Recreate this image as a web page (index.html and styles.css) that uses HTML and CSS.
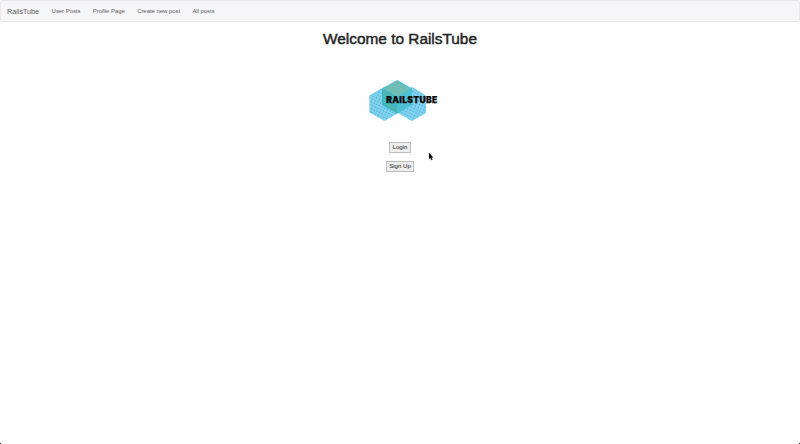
FILE: index.html
```html
<!DOCTYPE html>
<html lang="en">
<head>
<meta charset="utf-8">
<title>RailsTube</title>
<link rel="stylesheet" href="styles.css">
</head>
<body>
<nav class="navbar">
  <a class="brand">RailsTube</a>
  <a class="link">User Posts</a>
  <a class="link">Profile Page</a>
  <a class="link">Create new post</a>
  <a class="link">All posts</a>
</nav>
<main class="welcome">
  <h1><svg width="156" height="22" viewBox="0 0 156 22"><text x="1" y="15.800" textLength="154" lengthAdjust="spacingAndGlyphs">Welcome to RailsTube</text></svg></h1>
  <svg class="logo" width="80" height="50" viewBox="360 76 80 50">
    <defs>
      <pattern id="blueDots" width="3" height="3" patternUnits="userSpaceOnUse" patternTransform="rotate(25)">
        <rect width="3" height="3" fill="#82d2f0"/>
        <circle cx="1.500" cy="1.500" r=".75" fill="#4aafd4"/>
      </pattern>
      <pattern id="goldDots" width="3" height="3" patternUnits="userSpaceOnUse" patternTransform="rotate(25)">
        <circle cx="1.500" cy="1.500" r=".95" fill="#b9b36c"/>
      </pattern>
    </defs>
    <path d="M369.300 95.500 384 87l14 8.500V113l-13.500 8-15.200-8.500Z" fill="url(#blueDots)"/>
    <path d="M397 95.500 412 87l14 8.500V113l-14 8-15-8.500Z" fill="url(#blueDots)"/>
    <path d="M382 88.500 397.300 80l14.700 8.500V105l-14.700 8.500L382 105Z" fill="#4dc1d4"/>
    <path d="M382 88.500 397.300 97v16.500L382 105Z" fill="#41b9c2"/>
    <path d="M384 88.500 397.300 81l13 7.500-13 8Z" fill="url(#goldDots)"/>
    <path d="M384 91l8 5M384 94l5 3M386 104l5 2M390 107l5 3" stroke="#a0a448" stroke-width=".9" stroke-dasharray="1 1.300"/>
    <text class="wordmark" x="386.200" y="103.200" textLength="51.500" lengthAdjust="spacingAndGlyphs">RAILSTUBE</text>
  </svg>
  <button>Login</button>
  <button class="signup">Sign Up</button>
</main>
<svg class="cursor" width="6" height="9" viewBox="0 0 6 9"><path d="M1 .7v6.200l1.300-1.100 1 2.300 1.200-.5-1-2.200h1.600Z" fill="#050505" stroke="#222" stroke-width=".2"/></svg>
<i class="corner left"></i><i class="corner right"></i>
</body>
</html>
```
FILE: styles.css
```css
* { box-sizing: border-box; }
body {
  margin: 0;
  height: 444px;
  overflow: hidden;
  background: #fefdff;
  color: #333;
  font-family: "Liberation Sans", Arial, sans-serif;
}
.navbar {
  display: flex;
  align-items: center;
  height: 22px;
  padding-left: 6px;
  border: 1px solid #e9e8ea;
  border-radius: 2px;
  background: #f6f5f7;
  color: #5d5c5e;
  white-space: nowrap;
}
.brand { width: 44.600px; font-size: 7.200px; }
.link { font-size: 6px; margin-right: 12.300px; letter-spacing: -.05px; }
.welcome { display: flex; flex-direction: column; align-items: center; }
h1 { margin: 6px 0 0; height: 22px; }
h1 svg { display: block; }
h1 text { font-size: 15.200px; fill: #252525; stroke: #252525; stroke-width: .45px; font-weight: 500; }
.logo { display: block; margin-top: 26px; }
.wordmark {
  font: 900 8.600px Inter, sans-serif;
  letter-spacing: .35px;
  fill: #050505;
  stroke: #050505;
  stroke-width: .25px;
}
button {
  width: 22px;
  height: 11px;
  margin: 16px 0 0;
  padding: 0 0 2px;
  border: 1px solid #bdbdbd;
  border-radius: 0;
  background: #eee;
  color: #222;
  font: 6.100px/7px "Liberation Sans", Arial, sans-serif;
}
.signup { width: 28px; margin-top: 8px; }
.cursor { position: absolute; left: 428px; top: 152px; }
.corner { position: absolute; bottom: 0; width: 1px; height: 1px; background: #333; }
.left { left: 0; }
.right { right: 0; }
```
